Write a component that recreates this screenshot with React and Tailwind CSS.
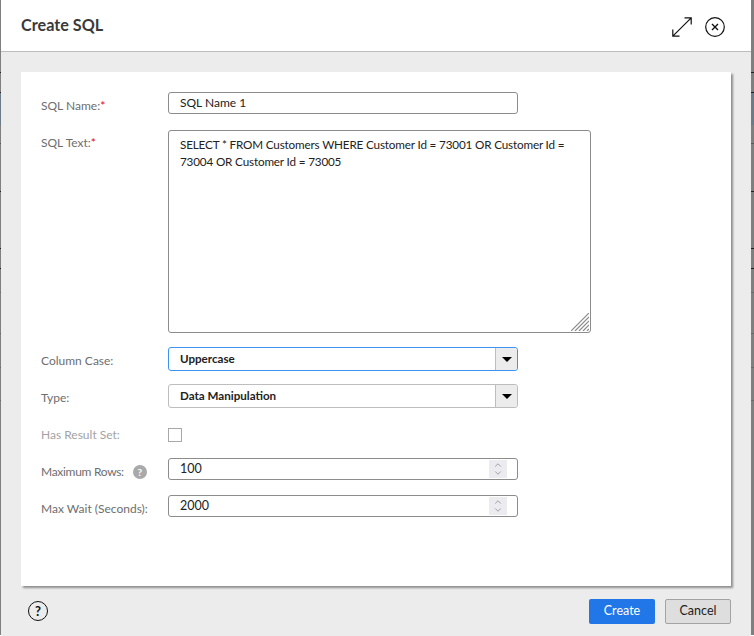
import { ChevronDown, ChevronUp } from 'lucide-react';

// rows of the page behind the dialog that show at its edges: [height, colour]
const backdrop = [
  [72, '#7f7f7f'], [1, '#1f1f1f'], [19, '#7f7f7f'], [1, '#1f1f1f'], [32, '#6d7a88'],
  [18, '#7f7f7f'], [1, '#5a5a5a'], [47, '#7f7f7f'], [1, '#1f1f1f'], [56, '#7f7f7f'],
  [1, '#1f1f1f'], [19, '#7f7f7f'], [1, '#1f1f1f'], [23, '#7f7f7f'], [1, '#6a6a6a'],
  [40, '#7f7f7f'], [1, '#6a6a6a'], [33, '#7f7f7f'], [1, '#6a6a6a'], [32, '#7f7f7f'],
  [1, '#6a6a6a'], [234, '#7f7f7f'],
];

function Backdrop({ className }) {
  return (
    <div className={`flex flex-col overflow-hidden shrink-0 ${className}`}>
      {backdrop.map(([h, c], i) => (
        <div key={i} className="shrink-0" style={{ height: h, background: c }} />
      ))}
    </div>
  );
}

function Label({ children, required, muted, className = 'mt-[6px]' }) {
  return (
    <div className={`w-[127px] text-[12px] leading-[16px] ${muted ? 'text-[#a3a3a3]' : 'text-[#6e6e6e]'} ${className}`}>
      {children}
      {required && <span className="text-[#e4002b]">*</span>}
    </div>
  );
}

function SelectBox({ value, focused }) {
  return (
    <div className={`flex w-[350px] h-6 bg-white rounded-[3px] border ${focused ? 'border-[#3b94f0]' : 'border-[#bdbdbd]'}`}>
      <div className="flex-1 px-[11px] text-[11.6px] leading-[21px] font-bold text-[#222]">{value}</div>
      <div className="w-[22px] flex items-center justify-center bg-[#ececec] border-l border-[#bdbdbd] rounded-r-[3px]">
        <div className="w-0 h-0 border-x-[5px] border-x-transparent border-t-[5px] border-t-black" />
      </div>
    </div>
  );
}

function NumberBox({ value }) {
  return (
    <div className="flex items-center w-[350px] h-[22px] bg-white rounded-[3px] border border-[#8c8c8c]">
      <div className="flex-1 px-[11px] text-[12.5px] leading-[20px] text-[#222]">{value}</div>
      <div className="w-[18px] h-[18px] mr-[10px] flex flex-col items-center justify-center bg-[#ecebf0] text-[#7a7a7a]">
        <ChevronUp size={12} strokeWidth={1.6} className="-mb-[1px]" />
        <ChevronDown size={12} strokeWidth={1.6} className="-mt-[1px]" />
      </div>
    </div>
  );
}

export default function App() {
  return (
    <div className="w-[754px] h-[636px] overflow-hidden bg-white font-['Lato',sans-serif] flex">
      <Backdrop className="w-px" />

      <div className="w-[750px] h-full shrink-0 flex flex-col bg-[#ececec] rounded-t-[3px]">
        {/* Header */}
        <div className="h-[52px] shrink-0 bg-white border-b border-[#bdbdbd] flex items-center pl-[20px] pr-[26px]">
          <h1 className="flex-1 text-[16.2px] font-bold text-[#3a3a3a] -mt-px">Create SQL</h1>
          <svg width="20" height="20" viewBox="0 0 20 20" fill="none" stroke="#111" strokeWidth="1.2" className="mr-[13px] mt-[3px]">
            <path d="M.8 19.2 19.2.8M12.5.8h6.7v6.7M.8 12.5v6.7h6.7" />
          </svg>
          <svg width="20" height="20" viewBox="0 0 20 20" fill="none" stroke="#111" className="mt-[3px]">
            <circle cx="10" cy="10" r="9.3" strokeWidth="1.2" />
            <path d="M7 7l6 6M13 7l-6 6" strokeWidth="1.4" />
          </svg>
        </div>

        {/* Form card */}
        <div className="mt-5 ml-[20px] w-[710px] h-[514px] shrink-0 bg-white shadow-[2px_2px_2px_rgba(0,0,0,0.4)] pt-5 pl-5">
          <div className="flex items-start h-[22px]">
            <Label required>SQL Name:</Label>
            <div className="w-[350px] h-[22px] rounded-[3px] border border-[#8c8c8c] px-[11px] text-[12px] leading-[20px] text-[#222]">SQL Name 1</div>
          </div>

          <div className="flex mt-[16px]">
            <Label required className="mt-[5px]">SQL Text:</Label>
            <div className="relative w-[423px] h-[203px] rounded-[3px] border border-[#8c8c8c] px-[11px] pt-[5px] text-[11.7px] tracking-[-0.16px] leading-[17px] text-[#222]">
              SELECT * FROM Customers WHERE Customer Id = 73001 OR Customer Id = 73004 OR Customer Id = 73005
              <svg width="18" height="18" viewBox="0 0 18 18" fill="none" stroke="#8a8a8a" strokeWidth="1.2" className="absolute right-px bottom-px">
                <path d="M0 18 18 0M4 18 18 4M8 18 18 8M12 18l6-6M16 18l2-2" />
              </svg>
            </div>
          </div>

          <div className="flex items-start mt-[14px]">
            <Label>Column Case:</Label>
            <SelectBox value="Uppercase" focused />
          </div>
          <div className="flex items-start mt-[13px]">
            <Label>Type:</Label>
            <SelectBox value="Data Manipulation" />
          </div>
          <div className="flex items-center mt-[19px]">
            <Label muted className="mt-0">Has Result Set:</Label>
            <div className="w-[14px] h-[14px] border border-[#a8a8a8] bg-white" />
          </div>
          <div className="flex items-start mt-[15px]">
            <Label className="mt-[6px] flex items-center">
              <span className="tracking-[-0.3px]">Maximum Rows:</span>
              <span className="ml-[9px] -mt-px w-[14px] h-[14px] rounded-full bg-[#a9a9a9] text-white text-[10px] leading-[14px] font-bold text-center">?</span>
            </Label>
            <NumberBox value="100" />
          </div>
          <div className="flex items-start mt-[15px]">
            <Label>Max Wait (Seconds):</Label>
            <NumberBox value="2000" />
          </div>
        </div>

        {/* Footer */}
        <div className="flex-1 flex items-center pl-[27px] pr-[20px]">
          <div className="w-[20px] h-[20px] rounded-full border border-[#111] text-[13px] leading-[18px] font-bold text-center text-[#111]">?</div>
          <div className="flex-1" />
          <button className="w-[66px] h-[25px] rounded-[2px] bg-[#2176e8] text-white text-[12.5px]">Create</button>
          <button className="ml-[10px] w-[66px] h-[25px] rounded-[2px] bg-[#dedede] border border-[#a3a3a3] text-[#222] text-[12.5px]">Cancel</button>
        </div>
      </div>

      <Backdrop className="w-[3px]" />
    </div>
  );
}
